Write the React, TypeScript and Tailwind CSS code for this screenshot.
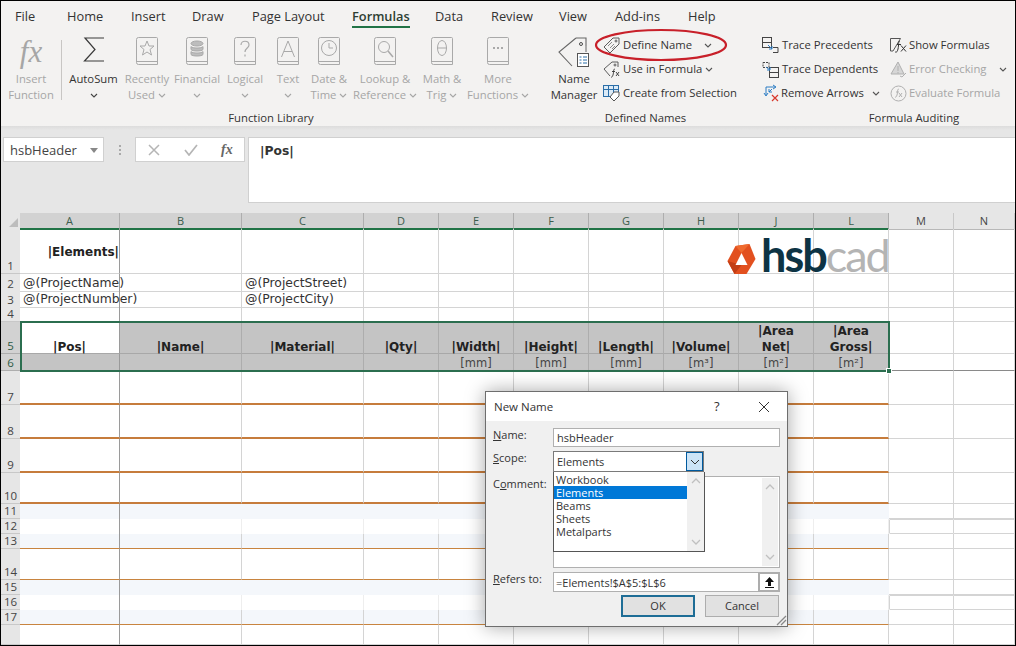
import type { ReactNode } from "react";

const Chevron = ({ className = "stroke-[#555]" }: { className?: string }) => (
  <svg viewBox="0 0 8 5" className={`w-[8px] h-[5px] fill-none ${className}`}>
    <path d="M1 1l3 3 3-3" strokeWidth="1.1" />
  </svg>
);

const Book = ({ children }: { children?: ReactNode }) => (
  <svg viewBox="0 0 22 29" className="w-[22px] h-[29px] fill-none stroke-[#a9a9a9]">
    <path d="M2.5.5h18a1 1 0 0 1 1 1v26h-19a2 2 0 0 1-2-2v-23a2 2 0 0 1 2-2z" />
    <path d="M.5 24.5h21" />
    {children}
  </svg>
);

const icons = {
  star: <path d="M11 4l2 5h5l-4 3.5 1.5 5.500L11 15l-4.500 3L8 12.500 4 9h5z" />,
  db: (
    <g className="fill-[#bdbdbd]">
      <ellipse cx="11" cy="6.500" rx="6" ry="2.500" />
      <path d="M5 9.500c1 2 11 2 12 0v3c-1 2-11 2-12 0zM5 14.500c1 2 11 2 12 0v3c-1 2-11 2-12 0z" />
    </g>
  ),
  help: <path d="M7 8c0-5 8-5 8 0 0 3-4 3-4 7M11 17.500v2" strokeWidth="1.200" />,
  letter: <path d="M4.500 20L11 4l6.500 16M7 14.500h8" />,
  clock: (
    <g>
      <circle cx="11" cy="11" r="7.500" />
      <path d="M11 6v5h4" />
    </g>
  ),
  search: (
    <g>
      <circle cx="10" cy="10" r="5.500" />
      <path d="M14 14l5 6" strokeWidth="1.500" />
    </g>
  ),
  theta: (
    <g>
      <ellipse cx="11" cy="11" rx="4.500" ry="7.500" />
      <path d="M6.500 11h9" />
    </g>
  ),
  dots: <path d="M6 11h2M10 11h2M14 11h2" strokeWidth="2" />,
};

const Sigma = () => (
  <svg viewBox="0 0 22 25" className="w-[22px] h-[25px] fill-none stroke-[#3a3a3a]">
    <path d="M21 1H2l10 11.500L1.500 24H21" strokeWidth="1.200" />
  </svg>
);

const NameManagerIcon = () => (
  <svg viewBox="0 0 32 32" className="w-[32px] h-[32px] fill-none stroke-[#4b4b4b]">
    <path d="M18 1h10v8M18 1L1 15l13 14" strokeWidth="1.100" className="stroke-[#666]" />
    <path d="M28 9v6" className="stroke-[#666]" />
    <circle cx="23" cy="7" r="1.500" />
    <rect x="19.500" y="16.500" width="11" height="13" className="fill-white stroke-[#555]" />
    <path d="M21.500 20h2M25 20h4M21.500 23h2M25 23h4M21.500 26h2M25 26h4" className="stroke-[#2b6ea8]" />
  </svg>
);

const TagIcon = () => (
  <svg viewBox="0 0 17 17" className="w-[17px] h-[17px] fill-none stroke-[#5c5c5c]">
    <path d="M10 1h6v6L7 16 1 10z" />
    <circle cx="13" cy="4" r="1" />
    <path d="M5 9l4-4M7 11l4-4M9 12l3-3" strokeWidth=".7" />
  </svg>
);

const TagFxIcon = () => (
  <svg viewBox="0 0 17 17" className="w-[17px] h-[17px] fill-none stroke-[#5c5c5c]">
    <path d="M9 1h6v5M9 1L1 8l6 7" />
    <circle cx="12" cy="4" r="1" />
    <path d="M12 8c-2 0-1 3-2 6s-2 2-2 2M9 10.500h3M13 11l3 4M16 11l-3 4" className="stroke-[#333]" strokeWidth=".9" />
  </svg>
);

const CreateIcon = () => (
  <svg viewBox="0 0 17 17" className="w-[17px] h-[17px] fill-none stroke-[#2b6ea8]">
    <rect x=".5" y=".5" width="15" height="11" className="fill-[#dcebf7]" />
    <path d="M.5 4.500h15M5.500.5v11M10.500.5v11" />
    <path d="M11 7h5v4l-5 5-4-4z" className="fill-white stroke-[#555]" />
  </svg>
);

const TracePrecIcon = () => (
  <svg viewBox="0 0 17 17" className="w-[17px] h-[17px] fill-none stroke-[#444]">
    <rect x=".5" y=".5" width="9" height="5" />
    <rect x=".5" y="5.500" width="9" height="5" />
    <path d="M11 10.500h5v5h-5" />
    <path d="M6 8l4 4M10 9v3H7" className="stroke-[#2b7cc4]" />
  </svg>
);

const TraceDepIcon = () => (
  <svg viewBox="0 0 17 17" className="w-[17px] h-[17px] fill-none stroke-[#444]">
    <path d="M1 1.500h6v5H1z" strokeDasharray="2 1" />
    <rect x="7.500" y="6.500" width="9" height="5" />
    <rect x="7.500" y="11.500" width="9" height="5" />
    <path d="M4 6l4 3M8 6v3H5" className="stroke-[#2b7cc4]" />
  </svg>
);

const RemoveIcon = () => (
  <svg viewBox="0 0 18 18" className="w-[18px] h-[18px] fill-none stroke-[#2b7cc4]">
    <path d="M4 11V3h9M11 1l3 2-3 2M2 9l2 3 2-3M7 8l3-3M7 5v3h3" />
    <path d="M10 11l6 6M16 11l-6 6" className="stroke-[#d8382c]" strokeWidth="1.200" />
  </svg>
);

const ErrorIcon = () => (
  <svg viewBox="0 0 17 17" className="w-[17px] h-[17px] fill-none stroke-[#b0b0b0]">
    <path d="M8 1l6 12H1z" className="fill-[#d6d6d6]" />
    <path d="M8 5v5M8 11v1.500M10 15l2 1 4-4" />
  </svg>
);

const EvalIcon = () => (
  <svg viewBox="0 0 17 17" className="w-[17px] h-[17px] fill-none stroke-[#b0b0b0]">
    <circle cx="8.500" cy="8.500" r="7.500" />
    <path d="M9 4c-2 0-1 3-2 6s-2 2-2 2M6 7h3M9 8l3 4M12 8l-3 4" />
  </svg>
);

const ShowFxIcon = () => (
  <svg viewBox="0 0 17 17" className="w-[17px] h-[17px] fill-none stroke-[#555]">
    <path d="M.5 1.500h10L3 14H.5z" />
    <path d="M10 4c-2 0-1 4-2 8s-2 3-3 3M7 7.500h4M11 8.500l5 6M16 8.500l-5 6" className="stroke-[#333]" />
  </svg>
);

function BigButton({ w, icon, l1, l2, off = true, chev = true }: { w: string; icon: ReactNode; l1: string; l2?: string; off?: boolean; chev?: boolean }) {
  return (
    <div className={`${w} flex flex-col items-center whitespace-nowrap leading-[16px] ${off ? "text-[#a6a6a6]" : "text-[#333]"}`}>
      <div className="h-[39px] flex items-start justify-center pt-[5px]">{icon}</div>
      <div>{l1}</div>
      <div className="h-[16px] flex items-center gap-[3px]">
        {l2}
        {chev && <Chevron className={off ? "stroke-[#a6a6a6]" : "stroke-[#444]"} />}
      </div>
    </div>
  );
}

function SmallButton({ icon, text, off, chev, pad = "gap-[3px]" }: { icon: ReactNode; text: string; off?: boolean; chev?: string; pad?: string }) {
  return (
    <div className={`h-[24px] flex items-center whitespace-nowrap ${pad} ${off ? "text-[#a6a6a6]" : "text-[#333]"}`}>
      {icon}
      <span>{text}</span>
      {chev !== undefined && <span className={chev}><Chevron /></span>}
    </div>
  );
}

const tabs = [
  ["File", "w-[52px]"],
  ["Home", "w-[64px]"],
  ["Insert", "w-[61px]"],
  ["Draw", "w-[60px]"],
  ["Page Layout", "w-[100px]"],
  ["Formulas", "w-[83px]"],
  ["Data", "w-[56px]"],
  ["Review", "w-[68px]"],
  ["View", "w-[56px]"],
  ["Add-ins", "w-[73px]"],
  ["Help", "w-[40px]"],
];

const Ribbon = () => (
  <div className="bg-[#f3f2f1] text-[11.3px]">
    <div className="h-[31px] flex pl-[14px] text-[12.800px] text-[#333]">
      {tabs.map(([t, w]) => (
        <div key={t} className={`${w} pt-[6px]`}>
          <span className={`inline-block h-[21px] ${t === "Formulas" ? "border-b-[2px] border-[#217346] font-semibold text-[#2c3e33]" : ""}`}>{t}</span>
        </div>
      ))}
    </div>
    <div className="h-[94px] flex overflow-hidden">
      <div className="w-[540px] shrink-0 flex flex-col">
        <div className="h-[78px] flex">
          <div className="flex">
            <BigButton w="w-[60px]" chev={false} l1="Insert" l2="Function" icon={<span className="font-['Liberation_Serif',serif] italic text-[31px] leading-[30px] text-[#a6a6a6]">fx</span>} />
            <div className="w-px h-[60px] mt-[8px] bg-[#c8c6c4]" />
          </div>
          <BigButton w="w-[63px]" off={false} l1="AutoSum" icon={<Sigma />} />
          <BigButton w="w-[44px]" l1="Recently" l2="Used" icon={<Book>{icons.star}</Book>} />
          <BigButton w="w-[56px]" l1="Financial" icon={<Book>{icons.db}</Book>} />
          <BigButton w="w-[40px]" l1="Logical" icon={<Book>{icons.help}</Book>} />
          <BigButton w="w-[46px]" l1="Text" icon={<Book>{icons.letter}</Book>} />
          <BigButton w="w-[36px]" l1="Date &" l2="Time" icon={<Book>{icons.clock}</Book>} />
          <BigButton w="w-[76px]" l1="Lookup &" l2="Reference" icon={<Book>{icons.search}</Book>} />
          <BigButton w="w-[38px]" l1="Math &" l2="Trig" icon={<Book>{icons.theta}</Book>} />
          <BigButton w="w-[74px]" l1="More" l2="Functions" icon={<Book>{icons.dots}</Book>} />
        </div>
        <div className="leading-[16px] text-center text-[#333]">Function Library</div>
      </div>
      <div className="w-px h-[89px] mt-[1px] bg-[#c8c6c4]" />
      <div className="w-[209px] shrink-0 flex flex-col">
        <div className="h-[78px] flex pl-[4px]">
          <BigButton w="w-[58px]" off={false} chev={false} l1="Name" l2="Manager" icon={<NameManagerIcon />} />
          <div className="pt-px">
            <SmallButton icon={<TagIcon />} text="Define Name" chev="ml-[9px]" />
            <SmallButton icon={<TagFxIcon />} text="Use in Formula" chev="" />
            <SmallButton icon={<CreateIcon />} text="Create from Selection" />
          </div>
        </div>
        <div className="leading-[16px] text-center text-[#333]">Defined Names</div>
      </div>
      <div className="w-px h-[89px] mt-[1px] bg-[#c8c6c4]" />
      <div className="w-[328px] shrink-0 flex flex-col">
        <div className="h-[78px] flex pl-[12px] pt-px">
          <div className="w-[128px]">
            <SmallButton icon={<TracePrecIcon />} text="Trace Precedents" />
            <SmallButton icon={<TraceDepIcon />} text="Trace Dependents" />
            <SmallButton icon={<RemoveIcon />} text="Remove Arrows" pad="gap-[1px]" chev="ml-[7px]" />
          </div>
          <div>
            <SmallButton icon={<ShowFxIcon />} text="Show Formulas" pad="gap-[2px]" />
            <SmallButton icon={<ErrorIcon />} text="Error Checking" off pad="gap-[2px]" chev="ml-[10px]" />
            <SmallButton icon={<EvalIcon />} text="Evaluate Formula" off pad="gap-[2px]" />
          </div>
        </div>
        <div className="leading-[16px] text-center text-[#333]">Formula Auditing</div>
      </div>
    </div>
    <div className="h-[4px] bg-gradient-to-b from-[#dcdcdc] to-[#e6e6e6]" />
  </div>
);

const FormulaBar = () => (
  <div className="h-[83px] bg-[#e6e6e6] flex pl-[2px] pt-[7px] gap-[3px]">
    <div className="w-[101px] h-[25px] bg-white border border-[#d0d0d0] flex items-center justify-between pl-[6px] pr-[5px] pt-[2px] font-['Open_Sans',sans-serif] text-[13px] text-[#444]">
      hsbHeader
      <span className="w-0 h-0 border-x-[4px] border-x-transparent border-t-[5px] border-t-[#888]" />
    </div>
    <div className="w-[25px] h-[25px] flex flex-col items-center justify-center gap-[2px]">
      <i className="w-[2px] h-[2px] bg-[#aaa]" />
      <i className="w-[2px] h-[2px] bg-[#aaa]" />
      <i className="w-[2px] h-[2px] bg-[#aaa]" />
    </div>
    <div className="w-[110px] h-[25px] bg-white border border-[#d0d0d0] flex items-center pl-[12px] gap-[24px]">
      <svg viewBox="0 0 12 12" className="w-[12px] h-[12px] stroke-[#b5b5b5] fill-none"><path d="M1 1l10 10M11 1L1 11" strokeWidth="1.500" /></svg>
      <svg viewBox="0 0 14 12" className="w-[14px] h-[12px] stroke-[#b5b5b5] fill-none"><path d="M1 6l4 5 8-10" strokeWidth="1.700" /></svg>
      <span className="-ml-[1px] font-['Liberation_Serif',serif] italic font-bold text-[14px] text-[#666]">fx</span>
    </div>
    <div className="flex-1 h-[66px] bg-white border-l border-y border-[#d0d0d0] pl-[11px] pt-[4px] font-['DejaVu_Sans',sans-serif] font-bold text-[12.300px] text-[#333]">|Pos|</div>
  </div>
);

const COLS = "grid grid-cols-[19px_100px_122px_122px_75px_75px_75px_75px_75px_75px_75px_65px_1fr]";
const colNames = ["A", "B", "C", "D", "E", "F", "G", "H", "J", "L", "M", "N"];

type Line = "plain" | "thick" | "thin" | "shade" | "blank";
const rowDefs: { n: string; h: string; line: Line }[] = [
  { n: "1", h: "h-[45px]", line: "plain" },
  { n: "2", h: "h-[16px]", line: "plain" },
  { n: "3", h: "h-[16px]", line: "plain" },
  { n: "4", h: "h-[16px]", line: "plain" },
  { n: "5", h: "h-[32px]", line: "plain" },
  { n: "6", h: "h-[17px]", line: "plain" },
  { n: "7", h: "h-[34px]", line: "thick" },
  { n: "8", h: "h-[34px]", line: "thick" },
  { n: "9", h: "h-[34px]", line: "thick" },
  { n: "10", h: "h-[31px]", line: "thick" },
  { n: "11", h: "h-[15px]", line: "shade" },
  { n: "12", h: "h-[15px]", line: "blank" },
  { n: "13", h: "h-[15px]", line: "thin" },
  { n: "14", h: "h-[31px]", line: "thin" },
  { n: "15", h: "h-[15px]", line: "shade" },
  { n: "16", h: "h-[15px]", line: "blank" },
  { n: "17", h: "h-[15px]", line: "thin" },
  { n: "", h: "h-[20px]", line: "plain" },
];

const boldCls = "font-bold text-[12px] leading-[16px] text-[#222] text-center";
const textCls = "pl-[3px] text-[12.400px] leading-[17px] whitespace-nowrap";
const cellText: Record<string, ReactNode> = {
  "1-0": <div className={`${boldCls} w-full h-full flex items-center justify-end pt-[2px]`}>|Elements|</div>,
  "2-0": <div className={textCls}>@(ProjectName)</div>,
  "3-0": <div className={textCls}>@(ProjectNumber)</div>,
  "2-2": <div className={textCls}>@(ProjectStreet)</div>,
  "3-2": <div className={textCls}>@(ProjectCity)</div>,
};
const headers = ["|Pos|", "|Name|", "|Material|", "|Qty|", "|Width|", "|Height|", "|Length|", "|Volume|", "|Area Net|", "|Area Gross|"];
const units = ["", "", "", "", "[mm]", "[mm]", "[mm]", "[m³]", "[m²]", "[m²]"];

function Cell({ row, col, line }: { row: string; col: number; line: Line }) {
  const inTable = col < 10;
  const a = col === 0 ? "border-r border-r-[#9a9a9a]" : "border-r border-r-[#d4d4d4]";
  if (row === "5" && inTable) {
    return (
      <div className={`flex items-end justify-center border-b border-b-[#a8a8a8] ${col === 0 ? "bg-white border-r border-r-[#9a9a9a]" : "bg-[#c4c4c4] border-r border-r-[#adadad]"}`}>
        <div className={`${boldCls} -mb-[2px] ${col > 7 ? "w-[50px]" : ""}`}>{headers[col]}</div>
      </div>
    );
  }
  if (row === "6" && inTable) {
    return (
      <div className={`bg-[#c4c4c4] flex items-center justify-center pt-[2px] text-[11.500px] leading-[15px] text-[#444] border-r ${col === 0 ? "border-r-[#9a9a9a]" : "border-r-[#adadad]"}`}>
        {units[col]}
      </div>
    );
  }
  if (row === "6") return <div className="border-b border-b-[#8a8a8a] border-r border-r-[#d4d4d4]" />;
  if (!inTable) {
    if (line === "blank") {
      return <div className={`border-y border-y-[#d4d4d4] border-r border-r-[#d4d4d4] ${col === 10 ? "border-l border-l-[#d4d4d4] rounded-l-[1px]" : ""}`} />;
    }
    return <div className="border-b border-b-[#d4d4d4] border-r border-r-[#d4d4d4]" />;
  }
  if (line === "thick") return <div className={`border-b-2 border-b-[#c67c3c] ${a}`} />;
  if (line === "thin") {
    return <div className={`border-b border-b-[#c8843f] ${row === "13" || row === "17" ? "bg-[#f4f7fb]" : ""} ${a}`} />;
  }
  if (line === "shade") return <div className={`bg-[#f4f7fb] ${col === 0 ? a : ""}`} />;
  if (line === "blank") return <div className={col === 0 ? a : "border-r border-r-[#eeeeee]"} />;
  return <div className={`border-b border-b-[#d4d4d4] ${a}`}>{cellText[`${row}-${col}`]}</div>;
}

const Sheet = () => (
  <div className="font-['DejaVu_Sans',sans-serif] text-[12px] text-[#333]">
    <div className={`${COLS} h-[16px] text-[11px] leading-[15px] text-center font-['Open_Sans',sans-serif]`}>
      <div className="bg-[#e6e6e6] flex items-end justify-end pr-[2px] pb-[3px]">
        <span className="w-0 h-0 border-l-[9px] border-l-transparent border-b-[9px] border-b-[#bdbdbd]" />
      </div>
      {colNames.map((c, i) => (
        <div key={c} className={i < 10 ? "bg-[#d2d2d2] text-[#3c5c4c] border-r border-r-[#aeaeae] border-b-2 border-b-[#217346]" : "bg-[#e6e6e6] text-[#444] border-r border-r-[#c8c8c8] border-b border-b-[#b8b8b8]"}>
          {c}
        </div>
      ))}
    </div>
    {rowDefs.map((r) => (
      <div key={r.n} className={`${COLS} ${r.h}`}>
        <div className={`flex items-end justify-center font-['Open_Sans',sans-serif] text-[11.500px] leading-[14px] border-b ${r.n === "5" || r.n === "6" ? "bg-[#d2d2d2] text-[#2d5a45] border-b-[#aeaeae]" : "bg-[#e6e6e6] text-[#444] border-b-[#c8c8c8]"}`}>
          {r.n}
        </div>
        {colNames.map((_, i) => (
          <Cell key={i} row={r.n} col={i} line={r.line} />
        ))}
      </div>
    ))}
  </div>
);

const Logo = () => (
  <div className="absolute left-[726px] top-[234px] flex items-center gap-[5px]">
    <svg viewBox="0 0 28 30" className="w-[29px] h-[30px] mt-[7px]">
      <path d="M8 2l14-2 6 15-9 15H7L0 17z" fill="#e2501f" />
      <path d="M8 2l14-2-8 9z" fill="#ef6a2e" />
      <path d="M0 17l7 13 7-9z" fill="#c23d14" />
      <path d="M14 9l6 12H8z" fill="#fff" />
    </svg>
    <div className="font-['Lato',sans-serif] text-[45px] leading-[40px] tracking-[-2px] whitespace-nowrap">
      <span className="font-bold text-[#0d3344]">hsb</span>
      <span className="font-normal text-[#b4b4b4]">cad</span>
    </div>
  </div>
);

const ScrollArrow = ({ up }: { up?: boolean }) => (
  <svg viewBox="0 0 10 6" className="w-[10px] h-[6px] fill-none stroke-[#c0c0c0]">
    <path d={up ? "M1 5l4-4 4 4" : "M1 1l4 4 4-4"} strokeWidth="1.300" />
  </svg>
);

const Label = ({ u, before, after, className }: { u: string; before?: string; after: string; className: string }) => (
  <div className={`w-[60px] shrink-0 whitespace-nowrap leading-[14px] ${className}`}>
    {before}
    <span className="underline">{u}</span>
    {after}
  </div>
);

const Dialog = () => (
  <div className="absolute left-[484px] top-[390px] w-[303px] h-[236px] flex flex-col border border-[#6e6e6e] bg-[#f0f0f0] shadow-[0_0_18px_rgba(0,0,0,0.35)] font-['Open_Sans',sans-serif] text-[11px] text-[#333]">
    <div className="h-[29px] shrink-0 bg-white flex items-center pl-[8px] text-[11.500px]">
      <span className="flex-1">New Name</span>
      <span className="w-[44px] text-[13px]">?</span>
      <svg viewBox="0 0 12 12" className="w-[12px] h-[12px] mr-[17px] stroke-[#333] fill-none"><path d="M1 1l10 10M11 1L1 11" /></svg>
    </div>
    <div className="flex-1 flex flex-col pl-[7px] pr-[7px] pt-[7px]">
      <div className="flex h-[19px]">
        <Label u="N" after="ame:" className="" />
        <div className="w-[227px] bg-white border border-[#b0b0b0] pl-[3px] leading-[18px]">hsbHeader</div>
      </div>
      <div className="flex h-[21px] mt-[4px] relative">
        <Label u="S" after="cope:" className="" />
        <div className="w-[151px] bg-white border border-[#7a7a7a] pl-[3px] leading-[20px] flex justify-between">
          Elements
          <div className="w-[17px] h-[19px] border border-[#005a9e] bg-[#cce4f7] flex items-center justify-center">
            <svg viewBox="0 0 10 6" className="w-[10px] h-[6px] fill-none stroke-[#333]"><path d="M1 1l4 4 4-4" /></svg>
          </div>
        </div>
        <div className="absolute left-[60px] top-[21px] z-10 w-[152px] h-[80px] bg-white border border-[#555] border-t-0 flex leading-[13px]">
          <div className="flex-1 pt-[1px]">
            {["Workbook", "Elements", "Beams", "Sheets", "Metalparts"].map((t) => (
              <div key={t} className={`pl-[2px] h-[13px] ${t === "Elements" ? "bg-[#0078d7] text-white" : ""}`}>{t}</div>
            ))}
          </div>
          <div className="w-[17px] bg-[#f0f0f0] flex flex-col items-center justify-between py-[6px]">
            <ScrollArrow up />
            <ScrollArrow />
          </div>
        </div>
      </div>
      <div className="flex h-[92px] mt-[4px]">
        <Label u="o" before="C" after="mment:" className="pt-[1px]" />
        <div className="w-[227px] bg-white border border-[#b0b0b0] flex justify-end p-px">
          <div className="w-[16px] bg-[#f0f0f0] flex flex-col items-center justify-between py-[6px]">
            <ScrollArrow up />
            <ScrollArrow />
          </div>
        </div>
      </div>
      <div className="flex h-[20px] mt-[4px]">
        <Label u="R" after="efers to:" className="" />
        <div className="w-[205px] bg-white border border-[#b0b0b0] border-r-0 pl-[2px] leading-[19px]">=Elements!$A$5:$L$6</div>
        <div className="w-[22px] border-2 border-[#adadad] bg-white flex items-center justify-center">
          <svg viewBox="0 0 11 11" className="w-[11px] h-[11px]"><path d="M5.500 0L10 5H7v4H4V5H1zM1 10h9v1H1z" fill="#111" /></svg>
        </div>
      </div>
      <div className="flex h-[22px] mt-[3px] ml-[128px] gap-[10px] text-center leading-[18px]">
        <div className="w-[74px] border-2 border-[#1e6d96] bg-[#e1e1e1]">OK</div>
        <div className="w-[74px] border border-[#adadad] bg-[#e1e1e1] leading-[20px]">Cancel</div>
      </div>
    </div>
    <svg viewBox="0 0 11 11" className="absolute right-0 bottom-0 w-[11px] h-[11px] fill-none stroke-[#888]"><path d="M10 1L1 10M10 5l-5 5" strokeWidth="1.300" /></svg>
  </div>
);

export default function App() {
  return (
    <div className="relative w-[1016px] h-[646px] overflow-hidden bg-white border border-black font-['Open_Sans',sans-serif]">
      <Ribbon />
      <FormulaBar />
      <Sheet />
      <Logo />
      <div className="absolute left-[19px] top-[320px] w-[870px] h-[51px] border-2 border-[#2b6e4f]" />
      <div className="absolute left-[885px] top-[367px] w-[6px] h-[6px] bg-[#2b6e4f] border border-white" />
      <svg viewBox="0 0 134 34" className="absolute left-[593px] top-[27px] w-[134px] h-[34px] fill-none"><ellipse cx="67" cy="17" rx="65" ry="15" stroke="#c8202a" strokeWidth="2.200" /></svg>
      <Dialog />
    </div>
  );
}
